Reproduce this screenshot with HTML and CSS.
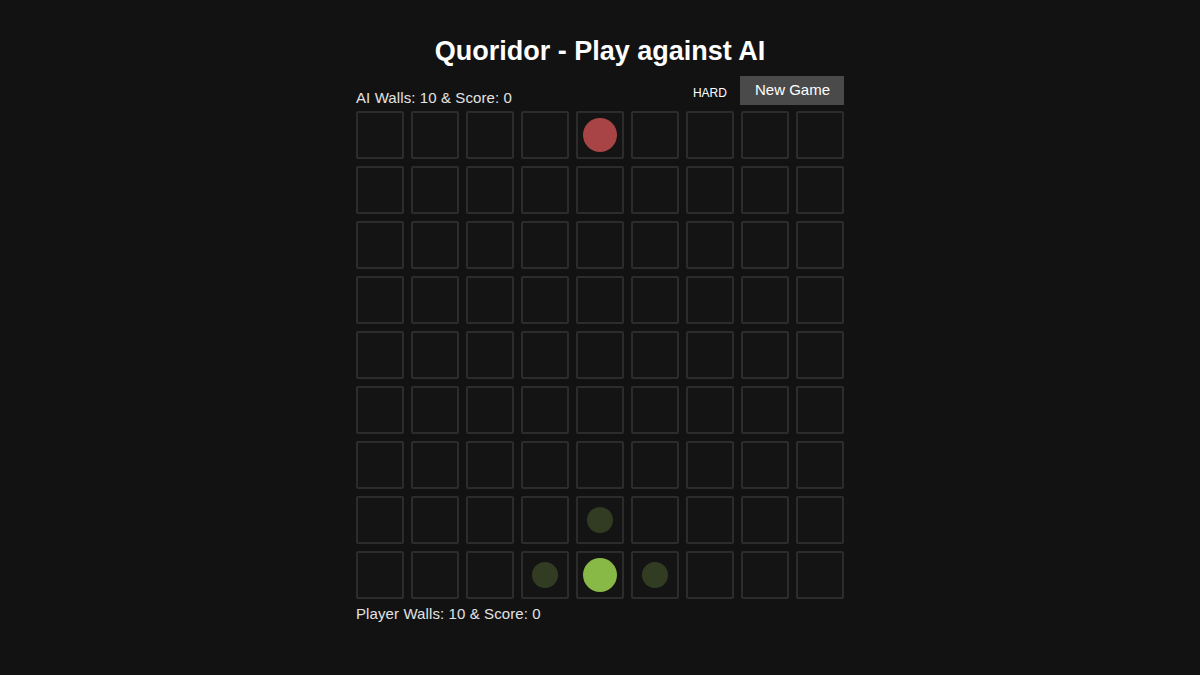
FILE: index.html
```html
<!DOCTYPE html>
<html>
<head>
<meta charset="utf-8">
<link rel="stylesheet" href="styles.css">
</head>
<body>
<div class="game">
  <h1 class="title">Quoridor - Play against AI</h1>
  <div class="topbar">
    <span class="info top">AI Walls: 10 &amp; Score: 0</span>
    <div class="controls">
      <span class="level">HARD</span>
      <button class="newgame">New Game</button>
    </div>
  </div>
  <div class="board" id="board"></div>
  <div class="info bottom">Player Walls: 10 &amp; Score: 0</div>
</div>
<script>
  var b = document.getElementById('board');
  for (var r = 0; r < 9; r++) {
    for (var c = 0; c < 9; c++) {
      var cell = document.createElement('div');
      cell.className = 'cell';
      if (r === 0 && c === 4) cell.innerHTML = '<span class="pawn ai"></span>';
      else if (r === 8 && c === 4) cell.innerHTML = '<span class="pawn player"></span>';
      else if ((r === 7 && c === 4) || (r === 8 && (c === 3 || c === 5))) cell.innerHTML = '<span class="hint"></span>';
      b.appendChild(cell);
    }
  }
</script>
</body>
</html>
```
FILE: styles.css
```css
html, body {
  margin: 0;
  padding: 0;
  background: #121212;
  font-family: "Liberation Sans", Arial, sans-serif;
  color: #e6e6e6;
}
.game {
  width: 488px;
  margin: 0 auto;
  padding-top: 36px;
}
.title {
  margin: 0;
  font-size: 27px;
  line-height: 30px;
  font-weight: bold;
  color: #ffffff;
  text-align: center;
  white-space: nowrap;
}
.topbar {
  display: flex;
  justify-content: space-between;
  align-items: flex-end;
  margin-top: 10px;
  height: 29px;
}
.info {
  font-size: 15px;
  line-height: 18px;
  color: #e2e2e2;
  letter-spacing: 0.1px;
}
.info.top {
  margin-bottom: -2px;
}
.controls {
  display: flex;
  align-items: center;
  gap: 13px;
}
.level {
  font-size: 12px;
  color: #ffffff;
  padding-top: 5px;
}
.newgame {
  background: #4a4a4a;
  color: #ffffff;
  border: none;
  height: 29px;
  padding: 0 14px 2px 15px;
  font-family: "Liberation Sans", Arial, sans-serif;
  font-size: 15px;
  line-height: 27px;
}
.board {
  margin-top: 6px;
  display: grid;
  grid-template-columns: repeat(9, 48px);
  grid-auto-rows: 48px;
  gap: 7px;
}
.cell {
  box-sizing: border-box;
  border: 2px solid #2c2c2c;
  border-radius: 2px;
  background: #141414;
  display: flex;
  align-items: center;
  justify-content: center;
}
.pawn {
  width: 34px;
  height: 34px;
  border-radius: 50%;
}
.pawn.ai { background: #a84445; }
.pawn.player { background: #88b846; }
.hint {
  width: 26px;
  height: 26px;
  border-radius: 50%;
  background: #323c22;
}
.bottom {
  margin-top: 6px;
}
```
